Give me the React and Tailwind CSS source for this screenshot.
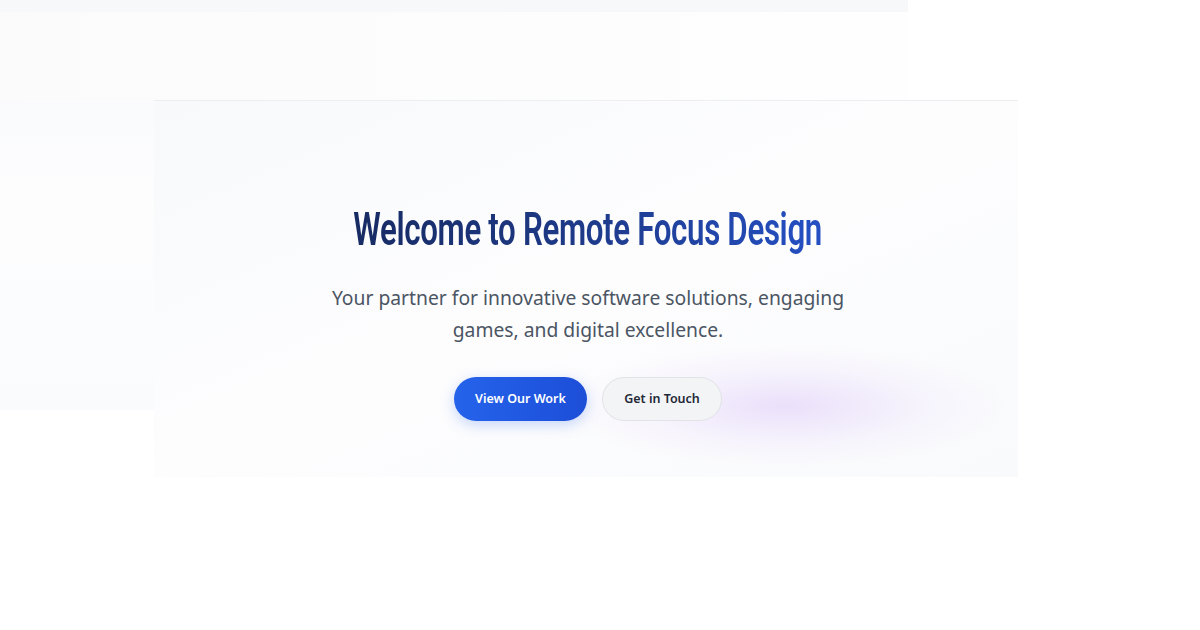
export default function App() {
  return (
    <div className="relative w-[1200px] h-[630px] overflow-hidden bg-white">
      <div className="absolute left-0 top-0 w-[908px] h-[410px] bg-gradient-to-b from-[#f7f8fa] via-[#fdfdfe] to-[#fafbfc]" />
      <div className="absolute left-0 top-[12px] w-[908px] h-[88px] bg-gradient-to-r from-[#fbfbfc] to-[#fefefe]" />
      <div className="relative pt-[100px] pl-[154px]">
        <div className="relative w-[864px] h-[377px] border-t border-[#eceef2] bg-gradient-to-br from-[#f8f9fb] via-[#fdfdfe] to-[#f9fafc] overflow-hidden">
          <div className="absolute left-[410px] top-[245px] w-[440px] h-[120px] rounded-full bg-[radial-gradient(ellipse_at_center,rgba(200,165,245,0.32)_0%,rgba(222,200,250,0.14)_45%,rgba(255,255,255,0)_72%)]" />
          <div className="relative flex flex-col items-center pt-[100px] pl-[4px]">
            <h1
              className="text-[46px] leading-[56px] font-semibold tracking-[-0.5px] bg-gradient-to-r from-[#172b63] via-[#1e3a8a] to-[#2450c4] bg-clip-text text-transparent scale-x-[0.68] whitespace-nowrap"
              style={{ fontFamily: 'Roboto, "Liberation Sans", sans-serif' }}
            >
              Welcome to Remote Focus Design
            </h1>
            <p
              className="mt-[25px] text-[19.3px] leading-[32px] text-[#4b5563] text-center"
              style={{ fontFamily: '"Noto Sans", "Open Sans", sans-serif' }}
            >
              Your partner for innovative software solutions, engaging
              <br />
              games, and digital excellence.
            </p>
            <div
              className="mt-[31px] flex gap-[15px]"
              style={{ fontFamily: '"Noto Sans", "Open Sans", sans-serif' }}
            >
              <button className="h-[44px] w-[133px] rounded-full bg-gradient-to-r from-[#2563eb] to-[#1d4ed8] text-white text-[12.5px] font-semibold shadow-[0_4px_14px_rgba(37,99,235,0.25)]">
                View Our Work
              </button>
              <button className="h-[44px] w-[120px] rounded-full bg-[#f3f4f6] border border-[#e1e3e7] text-[#1f2937] text-[12.5px] font-semibold">
                Get in Touch
              </button>
            </div>
          </div>
        </div>
      </div>
    </div>
  );
}
